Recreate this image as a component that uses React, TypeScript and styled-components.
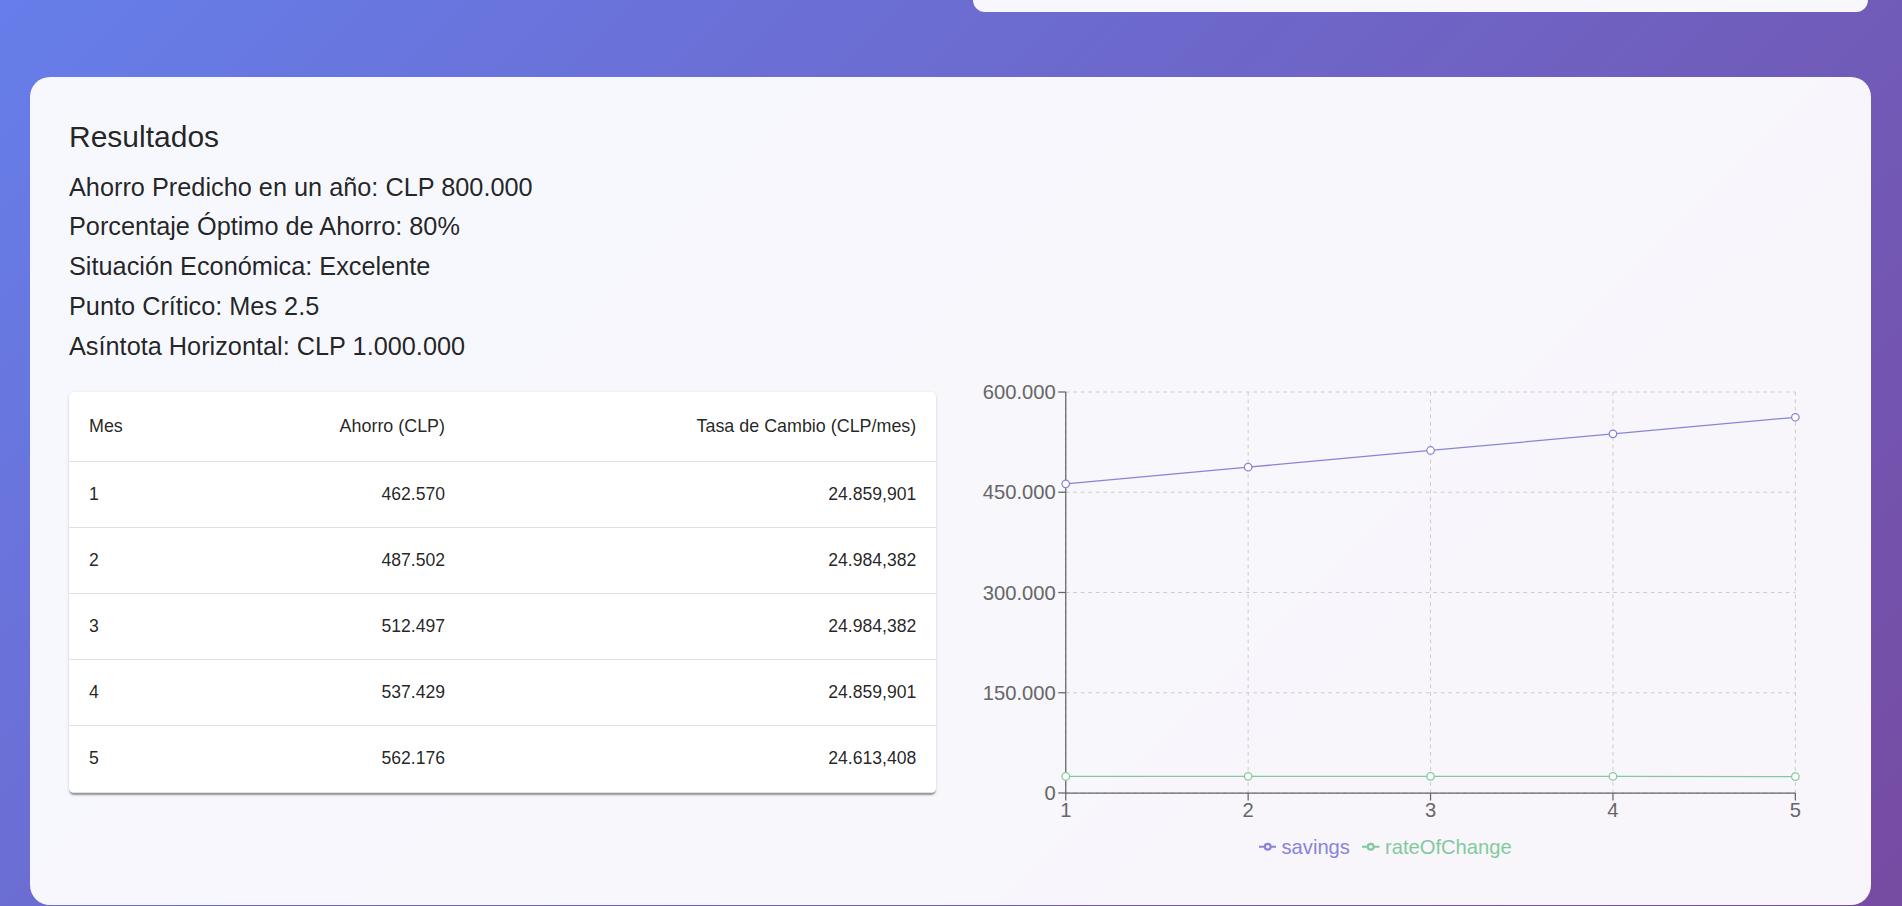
import React from "react";
import styled, { createGlobalStyle } from "styled-components";

const GlobalStyle = createGlobalStyle`
  html, body {
    margin: 0;
    padding: 0;
    height: 100%;
  }
  body {
    font-family: "Liberation Sans", Arial, Helvetica, sans-serif;
    background: linear-gradient(135deg, #667eea 0%, #764ba2 100%);
    background-attachment: fixed;
    overflow: hidden;
    color: rgba(0, 0, 0, 0.87);
  }
`;

const Page = styled.div`
  height: 100vh;
  box-sizing: border-box;
  padding: 0 31.5px 0 30px;
`;

const TopRow = styled.div`
  display: flex;
  justify-content: flex-end;
  padding-right: 2.5px;
`;

const TopCardTail = styled.div`
  width: 895px;
  height: 12px;
  background: rgba(255, 255, 255, 0.95);
  border-radius: 0 0 20px 20px;
`;

const Card = styled.section`
  margin-top: 65px;
  background: rgba(255, 255, 255, 0.95);
  border-radius: 20px;
  padding: 40px 39px;
`;

const Heading = styled.h2`
  margin: 0 0 10.5px;
  font-size: 30px;
  font-weight: 400;
  line-height: 40px;
`;

const ResultLine = styled.p`
  margin: 0;
  font-size: 25.3px;
  line-height: 39.8px;
  font-weight: 400;
`;

const ResultsGrid = styled.div`
  display: grid;
  grid-template-columns: 1fr 1fr;
  column-gap: 28px;
  margin-top: 25.2px;
  align-items: start;
`;

const TablePaper = styled.div`
  background: #fff;
  border-radius: 5px;
  overflow: hidden;
  box-shadow: 0 2.5px 1.25px -1.25px rgba(0, 0, 0, 0.2),
    0 1.25px 1.25px 0 rgba(0, 0, 0, 0.14), 0 1.25px 3.75px 0 rgba(0, 0, 0, 0.12);
`;

const Table = styled.table`
  width: 100%;
  border-collapse: collapse;
  table-layout: fixed;
`;

const HeadCell = styled.th<{ $align?: "left" | "right" }>`
  text-align: ${(p) => p.$align ?? "left"};
  font-weight: 400;
  font-size: 17.9px;
  line-height: 29px;
  padding: 20px;
  border-bottom: 1px solid rgb(224, 224, 224);
  color: rgba(0, 0, 0, 0.87);
  white-space: nowrap;
`;

const BodyCell = styled.td<{ $align?: "left" | "right" }>`
  text-align: ${(p) => p.$align ?? "left"};
  font-size: 17.6px;
  line-height: 25.2px;
  padding: 20px;
  border-bottom: 1px solid rgb(224, 224, 224);
  color: rgba(0, 0, 0, 0.87);
`;

const ChartBox = styled.div`
  height: 473px;
  display: flex;
  flex-direction: column;
`;

const ChartSvg = styled.svg`
  display: block;
  overflow: visible;
  font-family: "Liberation Sans", Arial, sans-serif;
`;

const Legend = styled.ul`
  list-style: none;
  margin: 0;
  padding: 0 37.5px 0 25px;
  display: flex;
  justify-content: center;
  font-size: 20.2px;
  line-height: 23px;
`;

const LegendItem = styled.li<{ $color: string }>`
  display: flex;
  align-items: center;
  margin-right: 12.5px;
  color: ${(p) => p.$color};
`;

const LegendIcon = styled.svg`
  width: 17.5px;
  height: 17.5px;
  margin-right: 5px;
`;

const rows = [
  { mes: 1, ahorro: 462570, tasa: 24859.901 },
  { mes: 2, ahorro: 487502, tasa: 24984.382 },
  { mes: 3, ahorro: 512497, tasa: 24984.382 },
  { mes: 4, ahorro: 537429, tasa: 24859.901 },
  { mes: 5, ahorro: 562176, tasa: 24613.408 },
];

const fmtInt = (n: number) =>
  Math.round(n)
    .toString()
    .replace(/\B(?=(\d{3})+(?!\d))/g, ".");
const fmtDec = (n: number) => {
  const [i, d] = n.toFixed(3).split(".");
  return `${i.replace(/\B(?=(\d{3})+(?!\d))/g, ".")},${d}`;
};

const W = 867.25;
const PL = 101.75;
const PR = 831.35;
const PT = 0;
const PB = 401;
const MAX = 600000;
const xAt = (i: number) => PL + ((PR - PL) * i) / 4;
const yAt = (v: number) => PB - ((PB - PT) * v) / MAX;
const yTicks = [0, 150000, 300000, 450000, 600000];
const SAV = "#8884d8";
const RATE = "#82ca9d";

const LegendGlyph: React.FC<{ color: string }> = ({ color }) => (
  <LegendIcon viewBox="0 0 32 32">
    <path
      strokeWidth={4}
      fill="none"
      stroke={color}
      d="M0,16h10.666666666666666A5.333333333333333,5.333333333333333,0,1,1,21.333333333333332,16H32M21.333333333333332,16A5.333333333333333,5.333333333333333,0,1,1,10.666666666666666,16"
    />
  </LegendIcon>
);

const Chart: React.FC = () => {
  const savPts = rows.map((r, i) => `${xAt(i)},${yAt(r.ahorro)}`).join(" ");
  const ratePts = rows.map((r, i) => `${xAt(i)},${yAt(r.tasa)}`).join(" ");
  return (
    <ChartBox>
      <ChartSvg width={W} height={444}>
        <g stroke="#ccc" strokeDasharray="3.75 3.75" fill="none">
          {yTicks.map((t) => (
            <line key={`h${t}`} x1={PL} x2={PR} y1={yAt(t)} y2={yAt(t)} />
          ))}
          {rows.map((_, i) => (
            <line key={`v${i}`} x1={xAt(i)} x2={xAt(i)} y1={PT} y2={PB} />
          ))}
        </g>
        <g stroke="#666" strokeWidth={1.25}>
          <line x1={PL} x2={PL} y1={PT} y2={PB} />
          <line x1={PL} x2={PR} y1={PB} y2={PB} />
          {yTicks.map((t) => (
            <line key={`yt${t}`} x1={PL - 7.5} x2={PL} y1={yAt(t)} y2={yAt(t)} />
          ))}
          {rows.map((_, i) => (
            <line key={`xt${i}`} x1={xAt(i)} x2={xAt(i)} y1={PB} y2={PB + 7.5} />
          ))}
        </g>
        <g fill="#666" fontSize={20.2}>
          {yTicks.map((t) => (
            <text key={`yl${t}`} x={PL - 10} y={yAt(t)} dy="0.355em" textAnchor="end">
              {fmtInt(t)}
            </text>
          ))}
          {rows.map((r, i) => (
            <text key={`xl${i}`} x={xAt(i)} y={PB + 10} dy="0.71em" textAnchor="middle">
              {r.mes}
            </text>
          ))}
        </g>
        <polyline points={savPts} fill="none" stroke={SAV} strokeWidth={1.25} />
        <polyline points={ratePts} fill="none" stroke={RATE} strokeWidth={1.25} />
        {rows.map((r, i) => (
          <circle key={`sd${i}`} cx={xAt(i)} cy={yAt(r.ahorro)} r={3.75} fill="#fff" stroke={SAV} strokeWidth={1.25} />
        ))}
        {rows.map((r, i) => (
          <circle key={`rd${i}`} cx={xAt(i)} cy={yAt(r.tasa)} r={3.75} fill="#fff" stroke={RATE} strokeWidth={1.25} />
        ))}
      </ChartSvg>
      <Legend>
        <LegendItem $color={SAV}>
          <LegendGlyph color={SAV} />
          savings
        </LegendItem>
        <LegendItem $color={RATE}>
          <LegendGlyph color={RATE} />
          rateOfChange
        </LegendItem>
      </Legend>
    </ChartBox>
  );
};

export default function App() {
  return (
    <>
      <GlobalStyle />
      <Page>
        <TopRow>
          <TopCardTail />
        </TopRow>
        <Card>
          <Heading>Resultados</Heading>
          <ResultLine>Ahorro Predicho en un año: CLP 800.000</ResultLine>
          <ResultLine>Porcentaje Óptimo de Ahorro: 80%</ResultLine>
          <ResultLine>Situación Económica: Excelente</ResultLine>
          <ResultLine>Punto Crítico: Mes 2.5</ResultLine>
          <ResultLine>Asíntota Horizontal: CLP 1.000.000</ResultLine>
          <ResultsGrid>
            <TablePaper>
              <Table>
                <colgroup>
                  <col style={{ width: 134 }} />
                  <col style={{ width: 262 }} />
                  <col />
                </colgroup>
                <thead>
                  <tr>
                    <HeadCell>Mes</HeadCell>
                    <HeadCell $align="right">Ahorro (CLP)</HeadCell>
                    <HeadCell $align="right">Tasa de Cambio (CLP/mes)</HeadCell>
                  </tr>
                </thead>
                <tbody>
                  {rows.map((r) => (
                    <tr key={r.mes}>
                      <BodyCell>{r.mes}</BodyCell>
                      <BodyCell $align="right">{fmtInt(r.ahorro)}</BodyCell>
                      <BodyCell $align="right">{fmtDec(r.tasa)}</BodyCell>
                    </tr>
                  ))}
                </tbody>
              </Table>
            </TablePaper>
            <Chart />
          </ResultsGrid>
        </Card>
      </Page>
    </>
  );
}
